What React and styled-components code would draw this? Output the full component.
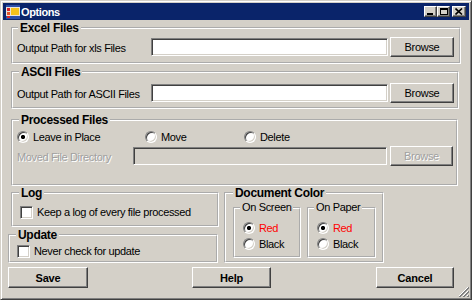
import React from 'react';
import styled, { createGlobalStyle } from 'styled-components';

const GlobalStyle = createGlobalStyle`
  html, body {
    margin: 0;
    padding: 0;
    background: #d4d0c8;
  }
  body {
    font-family: "Liberation Sans", Arial, sans-serif;
    font-size: 11px;
  }
`;

const Window = styled.div`
  position: relative;
  width: 472px;
  height: 300px;
  box-sizing: border-box;
  background: #d4d0c8;
  border: 1px solid;
  border-color: #d4d0c8 #404040 #404040 #d4d0c8;
  box-shadow: inset 1px 1px 0 #fff, inset -1px -1px 0 #808080;
  padding: 2px;
  display: flex;
  flex-direction: column;
  color: #000;
  letter-spacing: -0.35px;
`;

const TitleBar = styled.div`
  height: 17px;
  flex: none;
  background: #0a246a;
  display: flex;
  align-items: center;
  padding: 0 3px;
  gap: 1px;
`;

const Title = styled.span`
  color: #fff;
  font-weight: bold;
  font-size: 11px;
  letter-spacing: -0.4px;
`;

const Caption = styled.div`
  margin-left: auto;
  display: flex;
  align-items: center;
`;

const CapButton = styled.div`
  width: ${p => p.$w}px;
  height: 11px;
  margin-left: ${p => p.$gap || 0}px;
  box-sizing: border-box;
  background: #d4d0c8;
  border: 1px solid;
  border-color: #fff #404040 #404040 #fff;
  box-shadow: inset -1px -1px 0 #808080;
  display: flex;
  align-items: center;
  justify-content: center;
`;

const Body = styled.div`
  padding: 1px 8px 0 5px;
  display: flex;
  flex-direction: column;
`;

const Group = styled.fieldset`
  box-sizing: border-box;
  min-width: 0;
  width: ${p => (p.$w ? `${p.$w}px` : 'auto')};
  height: ${p => p.$h}px;
  margin: ${p => p.$m || '0'};
  padding: ${p => p.$p || '0'};
  border: 2px groove #fff;
  flex: none;
`;

const Legend = styled.legend`
  padding: 0 2px;
  margin-left: ${p => p.$x || 0}px;
  font-weight: ${p => (p.$sub ? 'normal' : 'bold')};
  font-size: ${p => (p.$sub ? 11 : 12)}px;
  line-height: ${p => (p.$sub ? 13 : 14)}px;
  letter-spacing: ${p => (p.$sub ? '-0.35px' : '-0.3px')};
`;

const Row = styled.div`
  display: flex;
  align-items: center;
  height: ${p => p.$h || 20}px;
  margin-top: ${p => p.$mt || 0}px;
`;

const Label = styled.span`
  width: ${p => p.$w}px;
  flex: none;
  padding-top: 2px;
  white-space: nowrap;
  color: ${p => (p.$disabled ? '#a0a0a0' : '#000')};
  text-shadow: ${p => (p.$disabled ? '1px 1px 0 #fff' : 'none')};
`;

const TextBox = styled.input`
  width: ${p => p.$w}px;
  height: ${p => p.$h || 18}px;
  box-sizing: border-box;
  margin: 0;
  padding: 0 3px;
  background: ${p => (p.disabled ? '#d4d0c8' : '#fff')};
  border: 1px solid;
  border-color: #808080 #fff #fff #808080;
  box-shadow: inset 1px 1px 0 #404040, inset -1px -1px 0 #d4d0c8;
  font: inherit;
  outline: none;
`;

const Button = styled.button`
  width: ${p => p.$w}px;
  height: ${p => p.$h || 20}px;
  margin: 0 0 0 ${p => p.$ml || 0}px;
  box-sizing: border-box;
  flex: none;
  padding: 0;
  background: #d4d0c8;
  border: 1px solid;
  border-color: #fff #404040 #404040 #fff;
  box-shadow: inset -1px -1px 0 #808080;
  font-family: "Liberation Sans", Arial, sans-serif;
  font-size: 11px;
  letter-spacing: ${p => (p.$bold ? '-0.2px' : '-0.3px')};
  font-weight: ${p => (p.$bold ? 'bold' : 'normal')};
  color: ${p => (p.disabled ? '#a0a0a0' : '#000')};
  text-shadow: ${p => (p.disabled ? '1px 1px 0 #fff' : 'none')};
`;

const Option = styled.label`
  display: flex;
  align-items: center;
  width: ${p => (p.$w ? `${p.$w}px` : 'auto')};
  height: 16px;
  flex: none;
  gap: 4px;
  color: ${p => p.$color || '#000'};
`;

const Radio = styled.input`
  appearance: none;
  width: 12px;
  height: 12px;
  margin: 0;
  flex: none;
  border-radius: 50%;
  box-sizing: border-box;
  border: 1px solid;
  border-color: #808080 #fff #fff #808080;
  box-shadow: inset 1px 1px 0 #404040, inset -1px -1px 0 #d4d0c8;
  background: #fff;
  &:checked {
    background: radial-gradient(circle, #000 0 1.8px, #fff 2.4px);
  }
`;

const Check = styled.input`
  appearance: none;
  width: 13px;
  height: 13px;
  margin: 0;
  flex: none;
  box-sizing: border-box;
  border: 1px solid;
  border-color: #808080 #fff #fff #808080;
  box-shadow: inset 1px 1px 0 #404040, inset -1px -1px 0 #d4d0c8;
  background: #fff;
`;

const BottomRow = styled.div`
  display: flex;
  align-items: flex-start;
`;

const Column = styled.div`
  width: 211px;
  flex: none;
  display: flex;
  flex-direction: column;
`;

const SubGroups = styled.div`
  display: flex;
  gap: 6px;
`;

const Buttons = styled.div`
  display: flex;
  margin-top: 4px;
`;

const Grip = styled.svg`
  position: absolute;
  right: 2px;
  bottom: 2px;
`;

const AppIcon = () => (
  <svg width="14" height="14" viewBox="0 0 14 14">
    <rect x="0" y="0" width="14" height="14" fill="#e8e4dc" />
    <rect x="0" y="0" width="14" height="2" fill="#2c4fa8" />
    <rect x="1" y="3" width="3" height="3" fill="#d8262a" />
    <rect x="1" y="7" width="3" height="3" fill="#e2552a" />
    <rect x="5" y="3" width="8" height="7" fill="#f4c21c" />
    <rect x="0" y="11" width="14" height="3" fill="#2c4fa8" />
    <rect x="1" y="11" width="3" height="2" fill="#d8262a" />
  </svg>
);

export default function App() {
  return (
    <>
      <GlobalStyle />
      <Window>
        <TitleBar>
          <AppIcon />
          <Title>Options</Title>
          <Caption>
            <CapButton $w={13}>
              <svg width="7" height="7" viewBox="0 0 7 7">
                <rect x="0" y="5" width="6" height="2" fill="#000" />
              </svg>
            </CapButton>
            <CapButton $w={13}>
              <svg width="8" height="7" viewBox="0 0 8 7">
                <rect x="0.5" y="0.5" width="7" height="6" fill="none" stroke="#000" />
                <rect x="0" y="0" width="8" height="2" fill="#000" />
              </svg>
            </CapButton>
            <CapButton $w={14} $gap={2}>
              <svg width="8" height="7" viewBox="0 0 8 7">
                <path d="M0.5 0.5 L7 6.5 M7 0.5 L0.5 6.5" stroke="#000" strokeWidth="1.6" />
              </svg>
            </CapButton>
          </Caption>
        </TitleBar>

        <Body>
          <Group $h={43} $m="0 0 0 3px" $p="2px 5px 0 4px">
            <Legend $x={1}>Excel Files</Legend>
            <Row>
              <Label $w={134}>Output Path for xls Files</Label>
              <TextBox $w={237} />
              <Button $w={64} $ml={2}>Browse</Button>
            </Row>
          </Group>

          <Group $h={44} $m="1px 2px 0 3px" $p="4px 3px 0 4px">
            <Legend $x={2}>ASCII Files</Legend>
            <Row>
              <Label $w={134}>Output Path for ASCII Files</Label>
              <TextBox $w={237} />
              <Button $w={64} $ml={2}>Browse</Button>
            </Row>
          </Group>

          <Group $h={73} $m="4px 3px 0 3px" $p="2px 3px 0 4px">
            <Legend $x={2}>Processed Files</Legend>
            <Row $h={16}>
              <Option $w={128}>
                <Radio type="radio" name="proc" defaultChecked />
                Leave in Place
              </Option>
              <Option $w={99}>
                <Radio type="radio" name="proc" />
                Move
              </Option>
              <Option>
                <Radio type="radio" name="proc" />
                Delete
              </Option>
            </Row>
            <Row $mt={1}>
              <Label $w={116} $disabled>Moved File Directory</Label>
              <TextBox $w={254} disabled />
              <Button $w={63} $ml={3} disabled>Browse</Button>
            </Row>
          </Group>

          <BottomRow>
            <Column>
              <Group $w={208} $h={41} $m="0 0 0 3px" $p="4px 4px 0 7px">
                <Legend $x={-1}>Log</Legend>
                <Option>
                  <Check type="checkbox" />
                  Keep a log of every file processed
                </Option>
              </Group>
              <Group $w={210} $h={35} $m="1px 0 0 0" $p="1px 4px 0 7px">
                <Legend $x={-1}>Update</Legend>
                <Option>
                  <Check type="checkbox" />
                  Never check for update
                </Option>
              </Group>
            </Column>

            <Group $w={160} $h={77} $m="0 0 0 5px" $p="1px 4px 0 7px">
              <Legend $x={0}>Document Color</Legend>
              <SubGroups>
                <Group $w={68} $h={57} $p="6px 2px 0 8px">
                  <Legend $sub $x={-3}>On Screen</Legend>
                  <Option $color="#ff0000">
                    <Radio type="radio" name="screen" defaultChecked />
                    Red
                  </Option>
                  <Option>
                    <Radio type="radio" name="screen" />
                    Black
                  </Option>
                </Group>
                <Group $w={69} $h={57} $p="6px 2px 0 8px">
                  <Legend $sub $x={-3}>On Paper</Legend>
                  <Option $color="#ff0000">
                    <Radio type="radio" name="paper" defaultChecked />
                    Red
                  </Option>
                  <Option>
                    <Radio type="radio" name="paper" />
                    Black
                  </Option>
                </Group>
              </SubGroups>
            </Group>
          </BottomRow>

          <Buttons>
            <Button $w={80} $h={21} $bold>Save</Button>
            <Button $w={79} $h={21} $ml={104} $bold>Help</Button>
            <Button $w={78} $h={21} $ml={105} $bold>Cancel</Button>
          </Buttons>
        </Body>

        <Grip width="11" height="11" viewBox="0 0 11 11">
          <path d="M10 1 L1 10 M10 5 L5 10 M10 9 L9 10" stroke="#fff" strokeWidth="1" />
          <path d="M11 1 L1 11 M11 2 L2 11 M11 5 L5 11 M11 6 L6 11 M11 9 L9 11 M11 10 L10 11" stroke="#808080" strokeWidth="1" />
        </Grip>
      </Window>
    </>
  );
}
